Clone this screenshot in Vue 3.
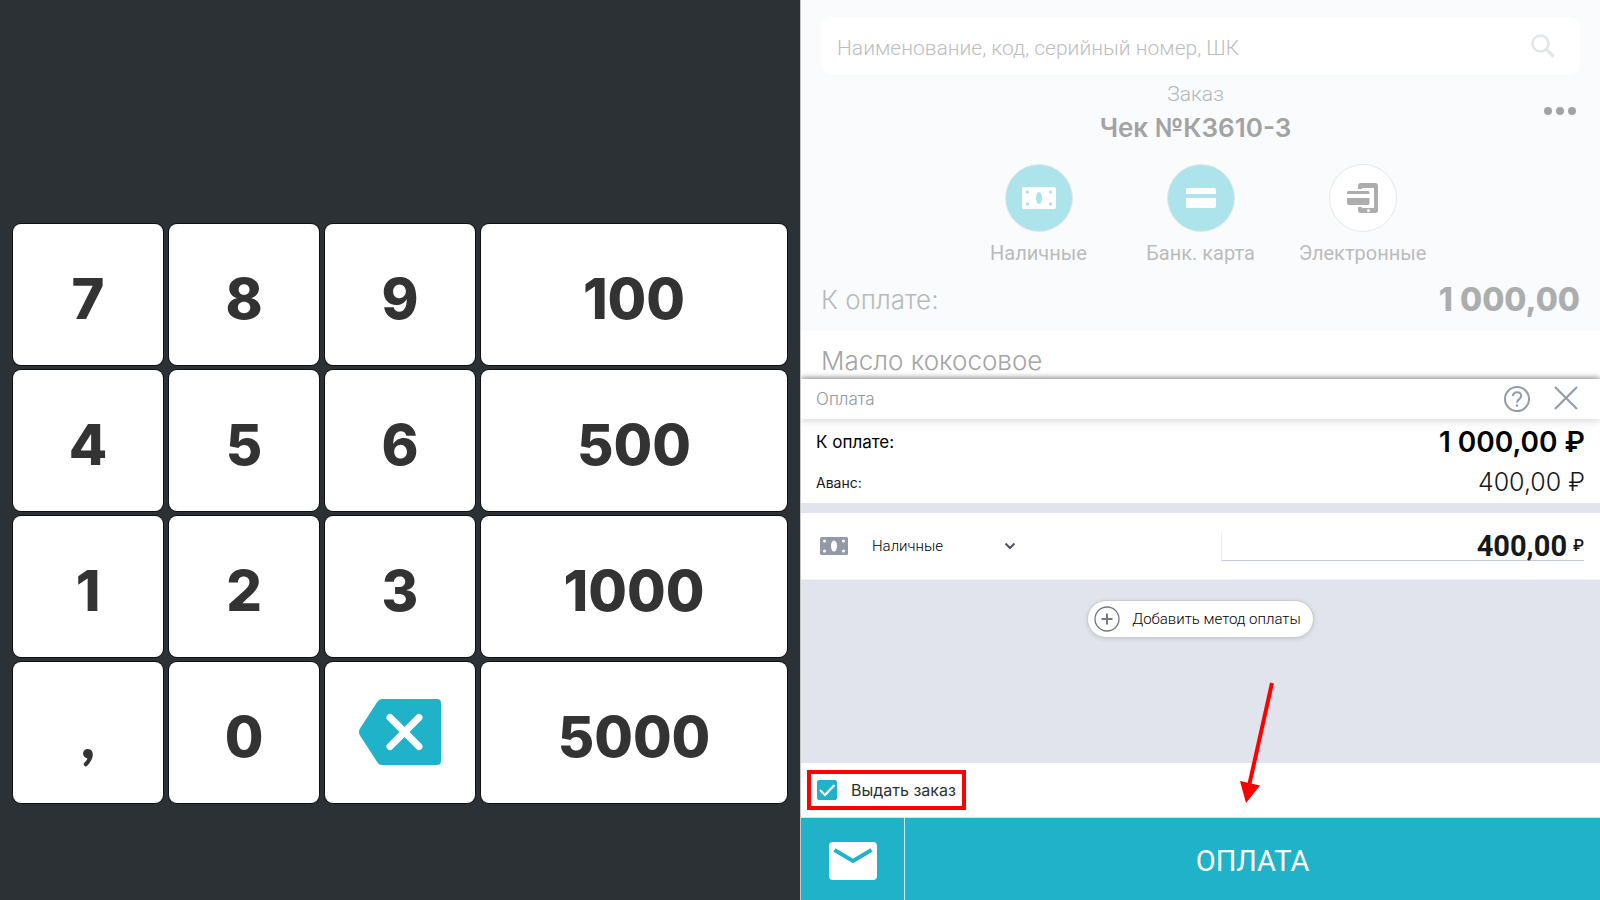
<template>
  <div class="pos">
    <section class="keypad-panel">
      <div class="keypad">
        <button
          v-for="key in keys"
          :key="key"
          type="button"
          class="key"
          :class="{ wide: key.length > 2 && key !== 'del', comma: key === ',' }"
          :aria-label="key === 'del' ? 'Удалить' : key"
          @click="press(key)"
        >
          <svg v-if="key === 'del'" class="del-icon" viewBox="0 0 84 68">
            <path d="M24 1H79Q83 1 83 5V63Q83 67 79 67H24Q21 67 19.500 64.500L2 37.500Q0 34 2 30.500L19.500 3.500Q21 1 24 1Z" fill="#1fb2c8" />
            <path d="M32 19.500L61 48.500M61 19.500L32 48.500" stroke="#fff" stroke-width="7" stroke-linecap="round" />
          </svg>
          <template v-else>{{ key }}</template>
        </button>
      </div>
    </section>

    <section class="order-panel">
      <div class="order">
        <div class="search">
          <input v-model="query" type="text" placeholder="Наименование, код, серийный номер, ШК" aria-label="Поиск товара" />
          <svg class="search-icon" viewBox="0 0 24 24">
            <circle cx="9.500" cy="9.500" r="8" fill="none" stroke="#e2e6ea" stroke-width="2.600" />
            <path d="M15.500 15.500L22.500 22.500" stroke="#e2e6ea" stroke-width="3.200" />
          </svg>
        </div>

        <div class="order-head">
          <div class="order-title">
            <span>Заказ</span>
            <h1>Чек №К3610-3</h1>
          </div>
          <button type="button" class="more" aria-label="Ещё">
            <svg viewBox="0 0 32 8">
              <circle v-for="x in [4, 16, 28]" :key="x" :cx="x" cy="4" r="4" fill="#a3a3a3" />
            </svg>
          </button>
        </div>

        <div class="pay-types">
          <button v-for="type in payTypes" :key="type.id" type="button" class="pay-type">
            <span class="pay-circle" :class="{ active: type.active }">
              <svg v-if="type.id === 'cash'" viewBox="0 0 36 36">
                <rect x="1" y="7" width="34" height="22" rx="2" fill="#fff" />
                <ellipse cx="18" cy="18" rx="3" ry="6" fill="#ade3ea" />
                <g fill="#ade3ea">
                  <circle cx="6.500" cy="12" r="1.700" />
                  <circle cx="29.500" cy="12" r="1.700" />
                  <circle cx="6.500" cy="24" r="1.700" />
                  <circle cx="29.500" cy="24" r="1.700" />
                </g>
              </svg>
              <svg v-else-if="type.id === 'card'" viewBox="0 0 36 36" fill="#fff">
                <path d="M5 8H31Q33 8 33 10V14H3V10Q3 8 5 8Z" />
                <path d="M3 18H33V26Q33 28 31 28H5Q3 28 3 26Z" />
              </svg>
              <svg v-else viewBox="0 0 36 36" fill="#adadad">
                <path d="M13 9V6Q13 3 16 3H30Q33 3 33 6V30Q33 33 30 33H16Q13 33 13 30V27H17V28H29V8H17V9Z" />
                <path d="M3.500 11H23Q24.500 11 24.500 12.500V14H2V12.500Q2 11 3.500 11Z" />
                <path d="M2 18H24.500V23Q24.500 25 22.500 25H4Q2 25 2 23Z" />
                <circle cx="23.500" cy="30.500" r="1.500" fill="#fff" />
              </svg>
            </span>
            {{ type.label }}
          </button>
        </div>

        <div class="order-total">
          <span>К оплате:</span>
          <strong>1 000,00</strong>
        </div>
        <div class="product">Масло кокосовое</div>
      </div>

      <div class="sheet">
        <header class="sheet-head">
          <h2>Оплата</h2>
          <button type="button" class="icon-btn" aria-label="Справка">
            <svg viewBox="0 0 26 26" fill="none" stroke="#939ca7">
              <circle cx="13" cy="13" r="12" stroke-width="2" />
              <path d="M8.800 10.300C8.800 7.900 10.500 6.300 13 6.300S17.200 7.900 17.200 10.100C17.200 13 13 13.300 13 16.700" stroke-width="2" />
              <path d="M13 18.500V20.700" stroke-width="2.400" />
            </svg>
          </button>
          <button type="button" class="icon-btn" aria-label="Закрыть">
            <svg viewBox="0 0 26 26">
              <path d="M2 1L24 23M24 1L2 23" stroke="#939ca7" stroke-width="2.200" />
            </svg>
          </button>
        </header>

        <dl class="totals">
          <div class="total-row main">
            <dt>К оплате:</dt>
            <dd>1 000,00 ₽</dd>
          </div>
          <div class="total-row">
            <dt>Аванс:</dt>
            <dd>400,00 ₽</dd>
          </div>
        </dl>

        <div class="method">
          <svg class="method-icon" viewBox="0 0 28 18">
            <rect width="28" height="18" rx="1.500" fill="#939aa6" />
            <ellipse cx="14" cy="9" rx="3" ry="5.500" fill="#fff" />
            <g fill="#fff">
              <circle cx="4.500" cy="4" r="1.500" />
              <circle cx="23.500" cy="4" r="1.500" />
              <circle cx="4.500" cy="14" r="1.500" />
              <circle cx="23.500" cy="14" r="1.500" />
            </g>
          </svg>
          <div class="method-select">
            <select v-model="method" aria-label="Метод оплаты">
              <option v-for="type in payTypes" :key="type.id" :value="type.id">{{ type.label }}</option>
            </select>
            <svg viewBox="0 0 12 8">
              <path d="M1.500 1.500L6 6L10.500 1.500" fill="none" stroke="#50555c" stroke-width="2" />
            </svg>
          </div>
          <label class="amount">
            <input v-model="amount" type="text" inputmode="decimal" aria-label="Сумма" />
            <span>₽</span>
          </label>
        </div>

        <div class="methods-rest">
          <button type="button" class="add-method">
            <svg viewBox="0 0 26 26" fill="none" stroke="#717985">
              <circle cx="13" cy="13" r="12" stroke-width="1.300" />
              <path d="M13 7.500V18.500M7.500 13H18.500" stroke-width="2" />
            </svg>
            Добавить метод оплаты
          </button>
        </div>

        <div class="issue">
          <label class="issue-label">
            <span class="check">
              <input v-model="issueOrder" type="checkbox" />
              <svg v-show="issueOrder" viewBox="0 0 20 20">
                <path d="M3 10L8 15L17.500 5" fill="none" stroke="#fff" stroke-width="2.200" />
              </svg>
            </span>
            Выдать заказ
          </label>
          <svg class="arrow" viewBox="0 0 36 122">
            <path d="M32 1L9 104" stroke="#f00" stroke-width="4" />
            <path d="M0 99L20 103.500L6 121Z" fill="#f00" />
          </svg>
        </div>

        <footer class="actions">
          <button type="button" class="mail" aria-label="Отправить чек">
            <svg viewBox="0 0 48 38">
              <rect width="48" height="38" rx="4" fill="#fff" />
              <path d="M5.500 8L24 19L42.500 8" fill="none" stroke="#1fb2c8" stroke-width="4" />
            </svg>
          </button>
          <button type="button" class="pay">ОПЛАТА</button>
        </footer>
      </div>
    </section>
  </div>
</template>

<script setup>
import { ref } from 'vue'

const keys = ['7', '8', '9', '100', '4', '5', '6', '500', '1', '2', '3', '1000', ',', '0', 'del', '5000']

const payTypes = [
  { id: 'cash', label: 'Наличные', active: true },
  { id: 'card', label: 'Банк. карта', active: true },
  { id: 'electronic', label: 'Электронные', active: false }
]

const query = ref('')
const method = ref('cash')
const amount = ref('400,00')
const issueOrder = ref(true)

const press = (key) => {
  if (key === 'del') {
    amount.value = amount.value.slice(0, -1)
  } else if (key.length > 2) {
    amount.value = `${key},00`
  } else {
    amount.value += key
  }
}
</script>

<style>
body {
  margin: 0;
}
</style>

<style scoped>
.pos {
  display: grid;
  grid-template-columns: 1fr 1fr;
  min-height: 100vh;
  font-family: Inter, "Liberation Sans", sans-serif;
  background: #fff;
}

.pos * {
  box-sizing: border-box;
}

button,
input,
select {
  margin: 0;
  padding: 0;
  border: 0;
  background: none;
  font: inherit;
  color: inherit;
}

button {
  cursor: pointer;
}

svg {
  display: block;
}

/* keypad */
.keypad-panel {
  padding: 224px 13px 96px;
  background: #2c3135;
}

.keypad {
  display: grid;
  grid-template-columns: repeat(5, 1fr);
  grid-auto-rows: 141px;
  gap: 5px 6px;
}

.key {
  display: flex;
  align-items: center;
  justify-content: center;
  padding-top: 8px;
  border-radius: 8px;
  background: #fff;
  box-shadow: 0 0 0 1px #0d1114;
  color: #333;
  font-size: 56px;
  font-weight: 800;
}

.wide {
  grid-column: span 2;
}

.comma {
  font-family: Lato, sans-serif;
}

.del-icon {
  width: 84px;
  height: 68px;
  margin-bottom: 10px;
}

/* order */
.order-panel {
  display: flex;
  flex-direction: column;
  border-left: 1px solid #c4c6c9;
  min-width: 0;
}

.order {
  padding-top: 17px;
  background: #fafbfd;
}

.search {
  display: flex;
  align-items: center;
  height: 58px;
  margin: 0 20px;
  padding: 0 25px 0 16px;
  border-radius: 10px;
  background: #fff;
}

.search input {
  flex: 1;
  padding-top: 4px;
  outline: none;
  font-family: Roboto, sans-serif;
  font-size: 21px;
  font-weight: 300;
  color: #777;
}

.search input::placeholder {
  color: #bdbdbd;
  opacity: 1;
}

.search-icon {
  width: 24px;
  height: 24px;
}

.order-head {
  display: grid;
  grid-template-columns: 1fr auto 1fr;
  align-items: start;
  padding: 6px 24px 0 14px;
}

.order-title {
  grid-column: 2;
  display: flex;
  flex-direction: column;
  align-items: center;
  font-family: Roboto, sans-serif;
  font-size: 21px;
  font-weight: 300;
  line-height: 26px;
  color: #b5b6b8;
}

.order-title h1 {
  margin: 0;
  font-family: Inter, sans-serif;
  font-size: 26px;
  font-weight: 600;
  line-height: 42px;
  color: #a3a3a3;
}

.more {
  justify-self: end;
  padding-top: 26px;
}

.more svg {
  width: 32px;
  height: 8px;
}

.pay-types {
  display: grid;
  grid-template-columns: repeat(3, 162px);
  justify-content: center;
  padding-top: 15px;
}

.pay-type {
  display: flex;
  flex-direction: column;
  align-items: center;
  gap: 8px;
  font-family: Roboto, sans-serif;
  font-size: 20px;
  line-height: 26px;
  color: #bbb;
}

.pay-circle {
  display: flex;
  align-items: center;
  justify-content: center;
  width: 68px;
  height: 68px;
  border: 1px solid #e6e8ea;
  border-radius: 50%;
  background: #fff;
}

.pay-circle.active {
  background: #ade3ea;
}

.pay-circle svg {
  width: 36px;
  height: 36px;
}

.order-total {
  display: flex;
  align-items: center;
  justify-content: space-between;
  height: 65px;
  padding: 2px 20px 0;
  font-size: 26px;
  font-weight: 300;
  color: #b8b9bb;
}

.order-total strong {
  font-size: 32px;
  font-weight: 800;
  color: #acadaf;
}

.product {
  height: 48px;
  padding: 10px 20px 0;
  background: #fff;
  font-size: 26px;
  font-weight: 300;
  line-height: 40px;
  color: #a4a4a4;
}

/* payment sheet */
.sheet {
  display: flex;
  flex: 1;
  flex-direction: column;
  background: #fff;
  box-shadow: 0 -1px 6px rgba(0, 0, 0, 0.45);
  clip-path: inset(-8px 0 0 0);
}

.sheet-head {
  display: flex;
  align-items: center;
  gap: 23px;
  height: 40px;
  padding: 0 21px 0 15px;
  box-shadow: 0 2px 8px rgba(0, 0, 0, 0.16);
}

.sheet-head h2 {
  flex: 1;
  margin: 0;
  font-size: 17px;
  font-weight: 300;
  color: #9298a2;
}

.icon-btn svg {
  width: 26px;
  height: 26px;
}

.totals {
  margin: 0;
  padding: 3px 15px 0;
  height: 84px;
}

.total-row {
  display: flex;
  align-items: center;
  justify-content: space-between;
  height: 40px;
  font-size: 14px;
  color: #16191c;
}

.total-row dd {
  margin: 0;
  font-size: 25px;
  font-weight: 300;
}

.total-row.main {
  font-size: 17px;
  color: #000;
}

.total-row.main dd {
  font-size: 28px;
  font-weight: 600;
}

.method {
  display: flex;
  align-items: center;
  padding: 0 16px 0 19px;
  height: 77px;
  border-top: 10px solid #e1e4ec;
  border-bottom: 1px solid #eff1f4;
}

.method-icon {
  width: 28px;
  height: 18px;
}

.method-select {
  display: grid;
  align-items: center;
  width: 144px;
  margin-left: 24px;
}

.method-select select {
  grid-area: 1 / 1;
  appearance: none;
  font-family: Roboto, sans-serif;
  font-size: 15px;
  font-weight: 300;
  line-height: 24px;
  color: #000;
}

.method-select svg {
  grid-area: 1 / 1;
  justify-self: end;
  width: 12px;
  height: 8px;
  pointer-events: none;
}

.amount {
  display: flex;
  align-items: center;
  gap: 6px;
  width: 363px;
  height: 30px;
  margin-left: auto;
  border-left: 1px solid #eceef3;
  border-bottom: 1px solid #c3c9d6;
  font-family: Roboto, sans-serif;
  font-size: 16px;
  font-weight: 500;
  color: #16191c;
}

.amount input {
  flex: 1;
  min-width: 0;
  outline: none;
  font-size: 29px;
  font-weight: 700;
  text-align: right;
}

.methods-rest {
  display: flex;
  flex: 1;
  align-items: flex-start;
  justify-content: center;
  min-height: 120px;
  padding-top: 20px;
  background: #e1e4ec;
}

.add-method {
  display: flex;
  align-items: center;
  gap: 12px;
  height: 38px;
  padding: 0 12px 0 6px;
  border: 1px solid #c7cbd2;
  border-radius: 19px;
  background: #fff;
  box-shadow: 0 1px 4px rgba(0, 0, 0, 0.12);
  font-family: Roboto, sans-serif;
  font-size: 15px;
  font-weight: 300;
  color: #000;
}

.add-method svg {
  width: 26px;
  height: 26px;
}

.issue {
  position: relative;
  display: flex;
  align-items: center;
  height: 54px;
  padding: 0 6px;
}

.issue-label {
  display: flex;
  align-items: center;
  gap: 14px;
  height: 40px;
  padding: 0 6px;
  border: 4px solid #f00;
  font-size: 16px;
  color: #2b2f33;
}

.check {
  display: grid;
  width: 20px;
  height: 20px;
}

.check input {
  grid-area: 1 / 1;
  appearance: none;
  border: 1px solid #1fb2c8;
  border-radius: 2px;
}

.check input:checked {
  background: #1fb2c8;
}

.check svg {
  grid-area: 1 / 1;
  pointer-events: none;
}

.arrow {
  position: absolute;
  bottom: 13px;
  left: 55%;
  width: 36px;
  height: 122px;
  pointer-events: none;
}

.actions {
  display: flex;
  height: 83px;
  border-top: 1px solid #c9e8ee;
  background: #1fb2c8;
}

.mail {
  display: flex;
  align-items: center;
  justify-content: center;
  width: 104px;
  padding-top: 4px;
  border-right: 1px solid #c9e8ee;
}

.mail svg {
  width: 48px;
  height: 38px;
}

.pay {
  flex: 1;
  padding-top: 4px;
  font-family: Roboto, sans-serif;
  font-size: 29px;
  color: #fff;
}
</style>
